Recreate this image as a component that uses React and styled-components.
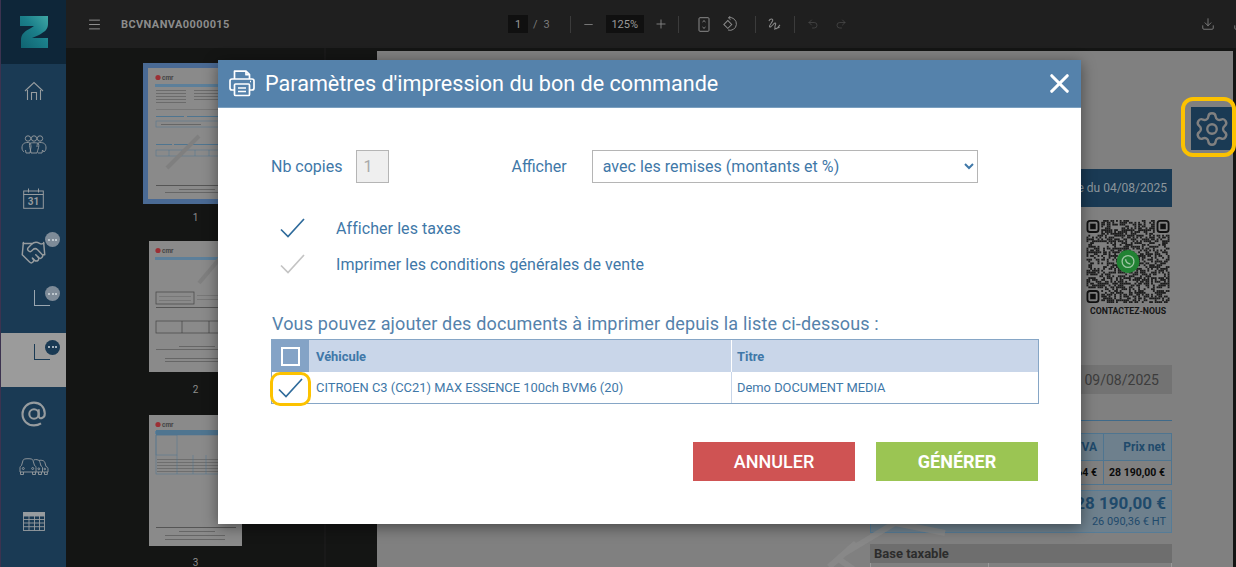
import React from "react";
import styled, { createGlobalStyle } from "styled-components";
import { Menu, Minus, Plus, Undo2, Redo2, Download, Settings, X, Handshake } from "lucide-react";

const Global = createGlobalStyle`
  html, body { margin: 0; padding: 0; height: 100%; overflow: hidden; background: #141514; }
  #root { height: 100%; }
  * { box-sizing: border-box; }
`;

const Page = styled.div`
  position: relative;
  width: 1236px;
  height: 567px;
  display: flex;
  overflow: hidden;
  font-family: Roboto, "Liberation Sans", sans-serif;
`;

/* ---------- sidebar ---------- */
const Sidebar = styled.aside`
  flex: 0 0 66px;
  display: flex;
  flex-direction: column;
  background: #1a3a54;
  border-left: 1px solid #3c3350;
`;
const LogoBox = styled.div`
  flex: 0 0 64px;
  background: #0e2639;
  display: flex;
  align-items: center;
  justify-content: center;
`;
const NavItem = styled.div`
  position: relative;
  flex: 0 0 53.8px;
  display: flex;
  align-items: center;
  justify-content: center;
  color: #979c9f;
  background: ${(p) => (p.$active ? "#9b9b9b" : "transparent")};
`;
const Badge = styled.span`
  position: absolute;
  right: 6px;
  top: 7px;
  width: 15px;
  height: 15px;
  border-radius: 50%;
  background: ${(p) => (p.$dark ? "#1a3a54" : "#7e8b98")};
  display: flex;
  align-items: center;
  justify-content: center;
  gap: 1.5px;
  & > i {
    width: 2px;
    height: 2px;
    border-radius: 50%;
    background: #d5dbe0;
  }
`;
const Corner = styled.span`
  align-self: flex-start;
  width: 16px;
  height: 16px;
  margin: 11px 0 0 16px;
  border-left: 1px solid ${(p) => (p.$dark ? "#1a3a54" : "#9aa6b0")};
  border-bottom: 1px solid ${(p) => (p.$dark ? "#1a3a54" : "#9aa6b0")};
`;

/* ---------- main ---------- */
const Main = styled.div`
  flex: 1;
  min-width: 0;
  display: flex;
  flex-direction: column;
`;
const Toolbar = styled.header`
  flex: 0 0 48px;
  background: #1f1f1f;
  display: flex;
  align-items: center;
  color: #8e8e8e;
`;
const ToolLeft = styled.div`
  flex: 0 0 442px;
  display: flex;
  align-items: center;
  padding-left: 21px;
  gap: 19px;
`;
const DocName = styled.span`
  font-size: 11px;
  font-weight: 700;
  letter-spacing: 0.4px;
  color: #8c8c8c;
`;
const ToolCenter = styled.div`
  display: flex;
  align-items: center;
  height: 24px;
  color: #8a8a8a;
`;
const PageBox = styled.span`
  width: ${(p) => p.$w}px;
  height: 18px;
  margin-left: ${(p) => p.$ml || 0}px;
  background: #101010;
  color: #9a9a9a;
  font-size: 11px;
  display: flex;
  align-items: center;
  justify-content: center;
`;
const PageText = styled.span`
  font-size: 11px;
  color: #7c7c7c;
  margin: 0 ${(p) => p.$mr}px 0 ${(p) => p.$ml}px;
`;
const ToolSep = styled.span`
  width: 1px;
  height: 17px;
  background: #3b3b3b;
  margin: 0 ${(p) => p.$mr}px 0 ${(p) => p.$ml}px;
`;
const ToolIcon = styled.span`
  display: flex;
  width: 14px;
  justify-content: center;
  margin: 0 ${(p) => p.$mr || 0}px 0 ${(p) => p.$ml || 0}px;
  color: ${(p) => (p.$dim ? "#4e4e4e" : "inherit")};
`;
const ToolRight = styled.div`
  margin-left: auto;
  margin-right: -11px;
  display: flex;
  gap: 18px;
  align-items: center;
  color: #8a8a8a;
`;
const Viewer = styled.div`
  flex: 1;
  min-height: 0;
  display: flex;
  background: #141514;
`;
const Thumbs = styled.div`
  flex: 0 0 260px;
  border-right: 2px solid #191919;
  display: flex;
  flex-direction: column;
  align-items: flex-start;
  padding: 15px 0 0 77px;
`;
const ThumbFrame = styled.div`
  width: ${(p) => (p.$sel ? 105 : 93)}px;
  height: ${(p) => (p.$sel ? 141 : 131)}px;
  margin-left: ${(p) => (p.$sel ? 0 : 6)}px;
  background: #8a8a8a;
  border: ${(p) => (p.$sel ? "5px solid #4a6a94" : "0")};
  flex-shrink: 0;
  & > svg {
    display: block;
    width: 100%;
    height: 100%;
  }
`;
const ThumbNum = styled.div`
  width: 105px;
  height: ${(p) => p.$h}px;
  font-size: 10px;
  color: #8d8d8d;
  text-align: center;
  padding-top: ${(p) => p.$pt}px;
  flex-shrink: 0;
`;
const DocGap = styled.div`
  flex: 0 0 51px;
`;
const DocPage = styled.div`
  position: relative;
  margin-top: 3px;
  width: 856px;
  background: #808080;
  display: flex;
  justify-content: flex-end;
  padding: 118px 61px 0 0;
  overflow: hidden;
`;
const DocColumn = styled.div`
  width: 302px;
  flex-shrink: 0;
  display: flex;
  flex-direction: column;
  align-items: stretch;
  & > * {
    flex-shrink: 0;
  }
`;
const DocBanner = styled.div`
  height: 38px;
  background: #1a3a54;
  color: #8c969c;
  font-size: 12px;
  display: flex;
  align-items: center;
  justify-content: flex-end;
  padding-right: 5px;
`;
const QrBlock = styled.div`
  margin: 13px 2px 0 0;
  align-self: flex-end;
  width: 84px;
  display: flex;
  flex-direction: column;
  align-items: center;
`;
const QrLabel = styled.div`
  font-size: 8.7px;
  font-weight: 700;
  line-height: 10px;
  color: #161616;
  margin-top: 3px;
  white-space: nowrap;
`;
const DateBox = styled.div`
  margin-top: 49px;
  height: 29px;
  background: #737373;
  color: #3c3c3c;
  font-size: 14px;
  display: flex;
  align-items: center;
  justify-content: flex-end;
  padding-right: 13px;
`;
const DocRule = styled.div`
  margin-top: 26px;
  height: 1px;
  background: #3f6a8a;
`;
const PriceTable = styled.div`
  margin-top: 12px;
  display: grid;
  grid-template-columns: 1fr 68px;
  border-bottom: 1px solid #4f7590;
  color: #1f4a6b;
`;
const PriceHead = styled.div`
  height: 27px;
  background: #6e808d;
  border-right: 1px solid #4f7590;
  border-top: 1px solid #4f7590;
  font-size: 12px;
  font-weight: 700;
  display: flex;
  align-items: center;
  justify-content: flex-end;
  padding-right: 6px;
`;
const PriceCell = styled.div`
  height: 24px;
  border-right: 1px solid #4f7590;
  border-top: 1px solid #4f7590;
  font-size: 10.5px;
  font-weight: 700;
  color: #0a0a0a;
  display: flex;
  align-items: center;
  justify-content: flex-end;
  padding-right: 6px;
  white-space: nowrap;
`;
const TotalBox = styled.div`
  margin-top: 5px;
  height: 43px;
  background: #6e808d;
  border: 1px solid #567c97;
  color: #1f4a6b;
  display: flex;
  flex-direction: column;
  align-items: flex-end;
  padding: 0 5px 0 0;
`;
const TotalBig = styled.div`
  font-size: 17px;
  font-weight: 700;
  line-height: 24px;
`;
const TotalSmall = styled.div`
  font-size: 11px;
  line-height: 13px;
`;
const TaxBox = styled.div`
  margin-top: 11px;
  height: 19px;
  background: #6e6e6e;
  color: #2c2c2c;
  font-size: 13px;
  font-weight: 700;
  display: flex;
  align-items: center;
  padding-left: 4px;
`;
const TaxRow = styled.div`
  display: grid;
  grid-template-columns: 118px 1fr;
  height: 20px;
  border-left: 1px solid #999;
  & > span { border-right: 1px solid #999; }
`;
const Watermark = styled.svg`
  position: absolute;
  left: 440px;
  top: 465px;
  pointer-events: none;
`;
const GearButton = styled.div`
  position: absolute;
  left: 814px;
  top: 56px;
  width: 41px;
  height: 43px;
  background: #1a3a54;
  color: #808080;
  display: flex;
  align-items: center;
  justify-content: center;
`;
const Ring = styled.div`
  position: absolute;
  left: ${(p) => p.$x}px;
  top: ${(p) => p.$y}px;
  width: ${(p) => p.$w}px;
  height: ${(p) => p.$h}px;
  border: ${(p) => p.$b}px solid #fcc200;
  border-radius: ${(p) => p.$r}px;
  pointer-events: none;
`;

/* ---------- modal ---------- */
const Modal = styled.section`
  position: absolute;
  left: 218px;
  top: 60px;
  width: 863px;
  height: 464px;
  background: #fff;
  box-shadow: 0 3px 14px rgba(0, 0, 0, 0.45);
  display: flex;
  flex-direction: column;
`;
const ModalHeader = styled.header`
  flex: 0 0 48px;
  background: #5582ab;
  border-bottom: 1px solid #7ba0c0;
  display: flex;
  align-items: center;
  padding: 0 6px 0 11px;
  color: #fff;
`;
const ModalTitle = styled.h2`
  margin: 0 0 0 10px;
  font-size: 21.6px;
  font-weight: 400;
  flex: 1;
`;
const ModalBody = styled.div`
  flex: 1;
  padding: 42px 43px 0 53px;
  color: #3f78a8;
`;
const FormRow = styled.div`
  display: flex;
  align-items: center;
  height: 33px;
`;
const FieldLabel = styled.label`
  font-size: 16px;
  margin-right: ${(p) => p.$mr}px;
`;
const CopyInput = styled.input`
  width: 33px;
  height: 33px;
  padding: 0 0 0 6px;
  background: #efefef;
  border: 1px solid #b5b5b5;
  border-radius: 0;
  color: #a9a9a9;
  font-family: inherit;
  font-size: 16px;
  outline: none;
  margin-right: 122px;
`;
const ModeSelect = styled.select`
  width: 386px;
  height: 33px;
  padding: 0 0 0 6px;
  background: #fff;
  border: 1px solid #b5b5b5;
  border-radius: 0;
  color: #3f78a8;
  font-family: inherit;
  font-size: 16px;
  letter-spacing: 0.05px;
  outline: none;
`;
const CheckList = styled.div`
  margin-top: 36px;
  display: flex;
  flex-direction: column;
  gap: 18px;
`;
const CheckRow = styled.div`
  display: flex;
  align-items: center;
  height: 18px;
  padding-left: 9px;
  font-size: 16px;
  letter-spacing: 0.07px;
`;
const CheckLabel = styled.span`
  margin-left: 31px;
`;
const SectionTitle = styled.h3`
  margin: 39px 0 3px 1px;
  font-size: 18px;
  line-height: 24px;
  font-weight: 400;
  letter-spacing: 0.15px;
  color: #5582ab;
`;
const DocTable = styled.div`
  width: 768px;
  border: 1px solid #86a6c6;
  display: grid;
  grid-template-columns: 37px 423px 1fr;
  grid-template-rows: 32px 31px;
  font-size: 12.9px;
`;
const HeadBoxCell = styled.div`
  background: #84a3c6;
  display: flex;
  align-items: center;
  justify-content: center;
`;
const SquareBox = styled.span`
  width: 19px;
  height: 19px;
  border: 2px solid #fff;
  background: #84a3c6;
`;
const HeadCell = styled.div`
  background: #c9d6e9;
  border-right: ${(p) => (p.$line ? "1px solid #fff" : "0")};
  font-weight: 700;
  display: flex;
  align-items: center;
  padding-left: ${(p) => (p.$line ? 7 : 5)}px;
`;
const RowBoxCell = styled.div`
  display: flex;
  align-items: center;
  justify-content: center;
`;
const RowCell = styled.div`
  border-right: ${(p) => (p.$line ? "1px solid #c9d6e9" : "0")};
  display: flex;
  align-items: center;
  padding-left: ${(p) => (p.$line ? 7 : 5)}px;
`;
const Actions = styled.div`
  margin-top: 38px;
  display: flex;
  justify-content: flex-end;
  gap: 21px;
`;
const ActionButton = styled.button`
  width: 162px;
  height: 39px;
  border: 0;
  background: ${(p) => (p.$go ? "#9bc553" : "#cf5353")};
  color: #fff;
  font-family: inherit;
  font-size: 18px;
  font-weight: ${(p) => (p.$go ? 700 : 500)};
  padding: 0;
`;

/* ---------- drawings ---------- */
const Logo = () => (
  <svg width="28" height="32" viewBox="0 0 28 32">
    <defs>
      <linearGradient id="zg" x1="0" y1="1" x2="1" y2="0">
        <stop offset="0" stopColor="#0f6270" />
        <stop offset="0.55" stopColor="#1b7f8a" />
        <stop offset="1" stopColor="#3fa7a5" />
      </linearGradient>
    </defs>
    <path d="M0 0 H28 V8 C28 14 24 16 19 19 L12 22 H28 V32 H1 V24 C1 18 5 15 11 12 L14 10 H0 Z" fill="url(#zg)" />
  </svg>
);
const HomeIcon = () => (
  <svg width="20" height="20" viewBox="0 0 20 20" fill="none" stroke="currentColor" strokeWidth="1.1">
    <path d="M1 10 L10 1.5 L19 10" />
    <path d="M3.5 9 V19 M16.5 9 V19" />
    <path d="M7.5 19 V11.5 H12.5 V19" />
  </svg>
);
const TeamIcon = () => (
  <svg width="26" height="20" viewBox="0 0 26 20" fill="none" stroke="currentColor" strokeWidth="0.9">
    <circle cx="7" cy="3.5" r="2.7" />
    <circle cx="13" cy="3.5" r="2.7" />
    <circle cx="19" cy="3.5" r="2.7" />
    <path d="M1 13 C1 9 3 7.5 7 7.5 C9 7.5 10 8.5 10 12 L9 18 H5 L4.5 15 M3 17 C2 16 1 15 1 13" />
    <path d="M8.5 8.5 C9.5 7.5 16.5 7.5 17.5 8.5 C18.5 11 17 14 16 18 H10 C9.5 14 8 11 8.5 8.5 Z" />
    <path d="M16 12 C16 8.5 17 7.5 19 7.5 C23 7.5 25 9 25 13 C25 15 24 16 23 17 L21.5 15 L21 18 H17" />
  </svg>
);
const CalendarIcon = () => (
  <svg width="21" height="21" viewBox="0 0 21 21" fill="none" stroke="currentColor" strokeWidth="1">
    <rect x="0.7" y="3" width="19.6" height="17.3" />
    <path d="M0.7 6.5 H20.3 M5.5 0.5 V4.5 M15.5 0.5 V4.5" />
    <text x="10.5" y="17.3" textAnchor="middle" fontFamily="Roboto, sans-serif" fontSize="10" fontWeight="700" fill="currentColor" stroke="none">31</text>
  </svg>
);
const AtIcon = () => (
  <svg width="26" height="26" viewBox="0 0 26 26" fill="none" stroke="currentColor" strokeWidth="2.1">
    <circle cx="13" cy="13" r="4.7" />
    <path d="M17.7 8.2 V15 C17.7 18.5 23.8 18 23.8 12.6 C23.8 6 19 1.6 13 1.6 C6.5 1.6 1.5 6.6 1.5 13 C1.5 19.6 6.5 24.4 13 24.4 C16 24.4 18 23.7 20 22.4" />
  </svg>
);
const CarsIcon = () => (
  <svg width="30" height="18" viewBox="0 0 30 18" fill="none" stroke="currentColor" strokeWidth="0.9">
    <path d="M1 14 V9.5 C1 8.5 2 8 2.5 7.5 L4 2.5 C4.5 1 6 0.7 9 0.7 C12 0.7 13.5 1 14 2.5 L15.5 7.5 C16.5 8 17 8.5 17 9.5 V14 H1 Z" />
    <path d="M1.5 14 V16.5 H4.5 V14 M13.5 14 V16.5 H16.5 V14" />
    <circle cx="4.3" cy="10.5" r="1" />
    <circle cx="13.7" cy="10.5" r="1" />
    <path d="M14.7 2 C16 1.5 17 1.5 18 1.7 C20 2 20.5 3 21 4.5 L22 8 C23 8.5 23.5 9 23.5 10 V14 H17 M19.5 14 V16.5 H22.5 V14" />
    <circle cx="19.8" cy="10.8" r="0.9" />
    <path d="M20 2.5 C21.5 2 23 2.3 24 2.7 C25.5 3.2 25.7 4 26 5 L27 8.5 C28.5 9 29 9.8 29 10.5 V14 H23.5 M25.5 14 V16.5 H28.3 V14" />
    <circle cx="25.8" cy="11" r="0.8" />
  </svg>
);
const GridIcon = () => (
  <svg width="22" height="19" viewBox="0 0 22 19" fill="none" stroke="currentColor" strokeWidth="0.9">
    <rect x="0.5" y="0.5" width="21" height="18" />
    <rect x="0.5" y="0.5" width="21" height="3.5" fill="currentColor" />
    <path d="M0.5 7.5 H21.5 M0.5 11 H21.5 M0.5 14.7 H21.5 M6 4 V18.5 M11.5 4 V18.5 M16.5 4 V18.5" />
  </svg>
);
const PageFitIcon = () => (
  <svg width="12" height="15" viewBox="0 0 12 15" fill="none" stroke="currentColor" strokeWidth="1">
    <rect x="1" y="0.7" width="10" height="13.6" rx="1" />
    <path d="M4.5 5 L6 3.6 L7.5 5 M4.5 10 L6 11.4 L7.5 10" />
  </svg>
);
const RotateIcon = () => (
  <svg width="16" height="16" viewBox="0 0 16 16" fill="none" stroke="currentColor" strokeWidth="1" style={{ flexShrink: 0 }}>
    <path d="M6 1.6 A6.4 6.4 0 1 1 5 14" />
    <path d="M7.5 0 L5.3 1.8 L7.5 3.6" />
    <rect x="2" y="5.6" width="5.6" height="5.6" transform="rotate(45 4.8 8.4)" />
  </svg>
);
const SignIcon = () => (
  <svg width="13" height="13" viewBox="0 0 14 14" fill="none" stroke="currentColor" strokeWidth="1.1">
    <path d="M1 3.2 C2 0.5 6 0.5 5 3 C4 5.5 1 8 1.7 9.5 C2.5 11 6 6 7.5 5.5 C9 5 8 7.5 7.5 9 C7 11 8.5 12.5 10 11 C11.5 9.5 12 8 13 7.5 M6.5 12 L12.5 10" />
  </svg>
);
const PrinterIcon = () => (
  <svg width="26" height="27" viewBox="0 0 26 27" fill="none" stroke="#fff" strokeWidth="1.7" strokeLinejoin="round">
    <path d="M5.5 9 V1.2 H17 L20.5 4.7 V9" />
    <path d="M17 1.2 V4.7 H20.5" />
    <path d="M5.5 20 H3 C1.8 20 1 19.2 1 18 V11 C1 9.8 1.8 9 3 9 H23 C24.2 9 25 9.8 25 11 V18 C25 19.2 24.2 20 23 20 H20.5" />
    <rect x="5.5" y="14" width="15" height="11.5" rx="1" />
    <path d="M9 18 H17 M9 21.5 H17" />
    <path d="M21 11.5 H22" />
  </svg>
);
const Check = ({ color }) => (
  <svg width="25" height="20" viewBox="0 0 25 20" fill="none" stroke={color} strokeWidth="1.7">
    <path d="M1 11.5 L8 18.5 L24 1" />
  </svg>
);

const QR_N = 45;
const qrCells = [];
for (let y = 0; y < QR_N; y++) {
  for (let x = 0; x < QR_N; x++) {
    const inFinder = (x < 8 && y < 8) || (x >= QR_N - 8 && y < 8) || (x < 8 && y >= QR_N - 8);
    if (inFinder) continue;
    const v = Math.sin(x * 12.9898 + y * 78.233) * 43758.5453;
    if (v - Math.floor(v) > 0.5) qrCells.push([x, y]);
  }
}
const Finder = ({ x, y }) => (
  <g>
    <rect x={x + 0.5} y={y + 0.5} width="6" height="6" rx="1.4" fill="none" stroke="#111" />
    <rect x={x + 2} y={y + 2} width="3" height="3" fill="#111" />
  </g>
);
const QrCode = () => (
  <svg width="84" height="83" viewBox="0 0 45 45">
    {qrCells.map(([x, y]) => (
      <rect key={`${x}-${y}`} x={x} y={y} width="1" height="1" fill="#1c1c1c" />
    ))}
    <Finder x={0} y={0} />
    <Finder x={38} y={0} />
    <Finder x={0} y={38} />
    <circle cx="22.5" cy="22.5" r="6.2" fill="#218233" />
    <circle cx="22.5" cy="22.5" r="3.2" fill="none" stroke="#9dc5a3" strokeWidth="0.7" />
    <path d="M21.2 21.3 C21.3 22.8 22.2 23.7 23.8 23.8" stroke="#9dc5a3" strokeWidth="0.8" fill="none" />
  </svg>
);

const Line = ({ x, y, w, c = "#666", h = 1 }) => <rect x={x} y={y} width={w} height={h} fill={c} />;
const ThumbHead = () => (
  <g>
    <circle cx="9" cy="9.5" r="2.6" fill="#9c2f34" />
    <text x="13" y="12" fontSize="6.5" fontWeight="700" fontFamily="Roboto, sans-serif" fill="#444">cmr</text>
    <Line x={6} y={16} w={82} h={3} c="#5c7f9a" />
  </g>
);
const ThumbOne = () => (
  <svg viewBox="0 0 93 131">
    <ThumbHead />
    {[22, 25, 28, 31, 34].map((y) => <Line key={y} x={7} y={y} w={30} c="#6b6b6b" />)}
    {[22, 25, 28, 31].map((y) => <Line key={y} x={45} y={y} w={32} c="#6b6b6b" />)}
    <Line x={7} y={41} w={72} c="#777" />
    <Line x={7} y={48} w={28} h={1} c="#4f7590" />
    <Line x={38} y={48} w={48} h={1} c="#4f7590" />
    <rect x="7" y="53" width="78" height="6" fill="none" stroke="#4f7590" strokeWidth="0.5" />
    <Line x={12} y={56} w={40} c="#666" />
    <Line x={7} y={76} w={16} c="#4f7590" />
    <Line x={25} y={76} w={60} c="#4f7590" />
    <rect x="7" y="82" width="78" height="6" fill="none" stroke="#4f7590" strokeWidth="0.5" />
    <path d="M20 82 V88 M33 82 V88 M46 82 V88 M60 82 V88" stroke="#4f7590" strokeWidth="0.5" />
    <path d="M18 100 L50 68" stroke="#7f7f7f" strokeWidth="4" />
    <Line x={7} y={117} w={78} c="#555" />
    <Line x={30} y={121} w={36} c="#666" />
    <Line x={16} y={124} w={62} c="#666" />
  </svg>
);
const ThumbTwo = () => (
  <svg viewBox="0 0 93 131">
    <ThumbHead />
    <rect x="7" y="51" width="38" height="12" fill="none" stroke="#444" strokeWidth="0.7" />
    <Line x={10} y={55} w={32} c="#777" />
    <Line x={10} y={59} w={32} c="#777" />
    <Line x={48} y={54} w={38} c="#777" />
    <Line x={48} y={58} w={38} c="#777" />
    <Line x={7} y={66} w={80} c="#555" />
    <rect x="7" y="80" width="80" height="12" fill="none" stroke="#444" strokeWidth="0.7" />
    <path d="M33 80 V92 M60 80 V92" stroke="#444" strokeWidth="0.7" />
    <Line x={30} y={105} w={36} c="#666" />
    <Line x={7} y={108} w={80} c="#666" />
    <Line x={16} y={117} w={60} c="#666" />
    <Line x={16} y={120} w={60} c="#666" />
    <path d="M50 42 L72 16" stroke="#7f7f7f" strokeWidth="4" />
  </svg>
);
const ThumbThree = () => (
  <svg viewBox="0 0 93 131">
    <ThumbHead />
    <Line x={7} y={15} w={80} h={5} c="#4f7590" />
    <rect x="7" y="20" width="80" height="39" fill="none" stroke="#4f7590" strokeWidth="0.5" />
    <rect x="7" y="20" width="21" height="20" fill="none" stroke="#4f7590" strokeWidth="0.5" />
    {[44, 47, 50, 53, 56].map((y) => <Line key={y} x={8} y={y} w={78} c="#6e6e6e" />)}
    <path d="M28 40 V59 M44 40 V59 M57 40 V59 M70 40 V59" stroke="#4f7590" strokeWidth="0.5" />
    <Line x={7} y={112} w={80} c="#555" />
    <Line x={30} y={116} w={36} c="#666" />
    <Line x={16} y={120} w={60} c="#666" />
    <Line x={16} y={124} w={60} c="#666" />
  </svg>
);
const Dots = () => (
  <>
    <i />
    <i />
    <i />
  </>
);

export default function App() {
  return (
    <Page>
      <Global />
      <Sidebar>
        <LogoBox><Logo /></LogoBox>
        <NavItem><HomeIcon /></NavItem>
        <NavItem><TeamIcon /></NavItem>
        <NavItem><CalendarIcon /></NavItem>
        <NavItem>
          <Handshake size={27} strokeWidth={1.3} />
          <Badge><Dots /></Badge>
        </NavItem>
        <NavItem>
          <Corner />
          <Badge><Dots /></Badge>
        </NavItem>
        <NavItem $active>
          <Corner $dark />
          <Badge $dark><Dots /></Badge>
        </NavItem>
        <NavItem><AtIcon /></NavItem>
        <NavItem><CarsIcon /></NavItem>
        <NavItem><GridIcon /></NavItem>
      </Sidebar>
      <Main>
        <Toolbar>
          <ToolLeft>
            <Menu size={15} strokeWidth={1.6} />
            <DocName>BCVNANVA0000015</DocName>
          </ToolLeft>
          <ToolCenter>
            <PageBox $w={20}>1</PageBox>
            <PageText $ml={5} $mr={6}>/</PageText>
            <PageText $ml={0} $mr={20}>3</PageText>
            <ToolSep $ml={0} $mr={11} />
            <ToolIcon><Minus size={13} strokeWidth={1.5} /></ToolIcon>
            <PageBox $w={38} $ml={10}>125%</PageBox>
            <ToolIcon $ml={10}><Plus size={14} strokeWidth={1.5} /></ToolIcon>
            <ToolSep $ml={10} $mr={18} />
            <ToolIcon $mr={13}><PageFitIcon /></ToolIcon>
            <ToolIcon $mr={17}><RotateIcon /></ToolIcon>
            <ToolSep $ml={0} $mr={12} />
            <ToolIcon $mr={12}><SignIcon /></ToolIcon>
            <ToolSep $ml={0} $mr={11} />
            <ToolIcon $dim $mr={14}><Undo2 size={12} strokeWidth={1.4} /></ToolIcon>
            <ToolIcon $dim><Redo2 size={12} strokeWidth={1.4} /></ToolIcon>
          </ToolCenter>
          <ToolRight>
            <Download size={14} strokeWidth={1.4} />
            <Download size={14} strokeWidth={1.4} />
          </ToolRight>
        </Toolbar>
        <Viewer>
          <Thumbs>
            <ThumbFrame $sel><ThumbOne /></ThumbFrame>
            <ThumbNum $h={37} $pt={8}>1</ThumbNum>
            <ThumbFrame><ThumbTwo /></ThumbFrame>
            <ThumbNum $h={43} $pt={12}>2</ThumbNum>
            <ThumbFrame><ThumbThree /></ThumbFrame>
            <ThumbNum $h={30} $pt={11}>3</ThumbNum>
          </Thumbs>
          <DocGap />
          <DocPage>
            <DocColumn>
              <DocBanner>Date du 04/08/2025</DocBanner>
              <QrBlock>
                <QrCode />
                <QrLabel>CONTACTEZ-NOUS</QrLabel>
              </QrBlock>
              <DateBox>Livraison : 09/08/2025</DateBox>
              <DocRule />
              <PriceTable>
                <PriceHead>TVA</PriceHead>
                <PriceHead>Prix net</PriceHead>
                <PriceCell>2 099,64 €</PriceCell>
                <PriceCell>28 190,00 €</PriceCell>
              </PriceTable>
              <TotalBox>
                <TotalBig>28 190,00 €</TotalBig>
                <TotalSmall>26 090,36 € HT</TotalSmall>
              </TotalBox>
              <TaxBox>Base taxable</TaxBox>
              <TaxRow><span /><span /></TaxRow>
            </DocColumn>
            <Watermark width="140" height="60" viewBox="0 0 140 60" fill="none" stroke="#8a8a8a" strokeWidth="6" opacity="0.8">
              <path d="M128 17 L78 7 L28 37" />
              <path d="M39 27 L12 51 M23 44 L39 55" />
            </Watermark>
            <GearButton><Settings size={38} strokeWidth={1.5} /></GearButton>
          </DocPage>
        </Viewer>
      </Main>

      <Modal>
        <ModalHeader>
          <PrinterIcon />
          <ModalTitle>Paramètres d'impression du bon de commande</ModalTitle>
          <X size={31} strokeWidth={2.4} color="#fff" />
        </ModalHeader>
        <ModalBody>
          <FormRow>
            <FieldLabel $mr={14}>Nb copies</FieldLabel>
            <CopyInput readOnly value="1" />
            <FieldLabel $mr={25}>Afficher</FieldLabel>
            <ModeSelect defaultValue="a">
              <option value="a">avec les remises (montants et %)</option>
            </ModeSelect>
          </FormRow>
          <CheckList>
            <CheckRow>
              <Check color="#2f6b9b" />
              <CheckLabel>Afficher les taxes</CheckLabel>
            </CheckRow>
            <CheckRow>
              <Check color="#c4c4c4" />
              <CheckLabel>Imprimer les conditions générales de vente</CheckLabel>
            </CheckRow>
          </CheckList>
          <SectionTitle>Vous pouvez ajouter des documents à imprimer depuis la liste ci-dessous :</SectionTitle>
          <DocTable>
            <HeadBoxCell><SquareBox /></HeadBoxCell>
            <HeadCell $line>Véhicule</HeadCell>
            <HeadCell>Titre</HeadCell>
            <RowBoxCell><Check color="#2f6b9b" /></RowBoxCell>
            <RowCell $line>CITROEN C3 (CC21) MAX ESSENCE 100ch BVM6 (20)</RowCell>
            <RowCell>Demo DOCUMENT MEDIA</RowCell>
          </DocTable>
          <Actions>
            <ActionButton>ANNULER</ActionButton>
            <ActionButton $go>GÉNÉRER</ActionButton>
          </Actions>
        </ModalBody>
      </Modal>
      <Ring $x={270} $y={372} $w={41} $h={34} $b={3} $r={10} />
      <Ring $x={1181} $y={97} $w={55} $h={60} $b={4} $r={12} />
    </Page>
  );
}
